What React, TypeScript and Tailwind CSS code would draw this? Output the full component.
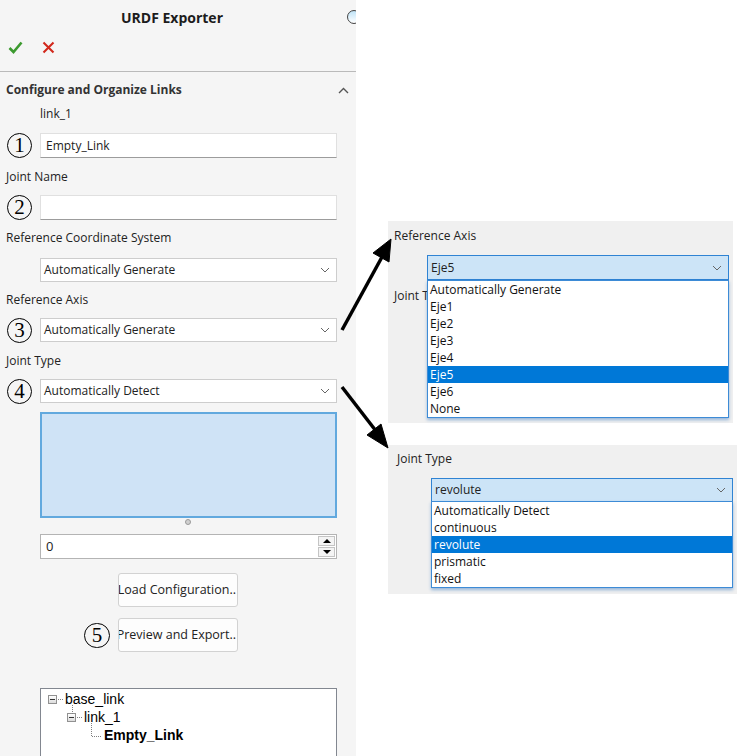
import React from "react";

function Circled({ n }: { n: number }) {
  return (
    <div className="w-[40px] shrink-0 flex pl-[7px]">
      <div className="w-[25px] h-[25px] rounded-full border-[1.3px] border-black flex items-center justify-center font-['Liberation_Serif',serif] text-[21px] leading-none text-black">
        {n}
      </div>
    </div>
  );
}

function Chevron({ color = "#666" }: { color?: string }) {
  return (
    <svg width="10" height="6" viewBox="0 0 10 6">
      <polyline points="1,1 5,5 9,1" fill="none" stroke={color} strokeWidth="1" />
    </svg>
  );
}

function SelectBox({ value }: { value: string }) {
  return (
    <div className="w-[297px] h-full bg-white border border-[#cdcdcd] flex items-center justify-between pl-[3px] pr-[6px]">
      <span>{value}</span>
      <Chevron />
    </div>
  );
}

function TextBox({ value }: { value: string }) {
  return (
    <div className="w-[297px] h-full bg-white border border-[#e0e0e0] border-b-[#9c9c9c] flex items-center pl-[5px]">
      {value}
    </div>
  );
}

function Row({ n, children, className }: { n?: number; children: React.ReactNode; className: string }) {
  return (
    <div className={"flex items-center " + className}>
      {n ? <Circled n={n} /> : <div className="w-[40px] shrink-0" />}
      {children}
    </div>
  );
}

function TreeBox() {
  return (
    <div className="w-[9px] h-[9px] border border-[#919191] bg-gradient-to-b from-white to-[#dcdcdc] flex items-center justify-center">
      <div className="w-[5px] h-px bg-[#333]" />
    </div>
  );
}

function DropList({ items, selected }: { items: string[]; selected: string }) {
  return (
    <div className="w-[302px] bg-white border border-[#3d8bd6] shadow-[0_2px_3px_rgba(40,110,190,0.45)]">
      {items.map((it) => (
        <div
          key={it}
          className={"h-[17px] flex items-center pl-[2px]" + (it === selected ? " bg-[#0078d7] text-white" : " text-[#111]")}
        >
          {it}
        </div>
      ))}
    </div>
  );
}

export default function App() {
  return (
    <div className="w-[738px] h-[756px] bg-white relative overflow-hidden flex font-['Open_Sans',sans-serif] text-[12px] text-[#222]">
      {/* property manager panel */}
      <div className="w-[356px] h-full shrink-0 bg-[#f5f5f5] flex flex-col overflow-hidden">
        <div className="h-[34px] relative flex items-center justify-center pr-[12px]">
          <span className="text-[14px] font-bold text-[#1c1c1c]">URDF Exporter</span>
          <div className="absolute left-[347px] top-[10px] w-[14px] h-[14px] rounded-full border-[1.5px] border-[#444] bg-gradient-to-b from-[#bfe3f7] to-white" />
        </div>
        <div className="h-[37px] flex items-start pl-[8px] pt-[7px] gap-[19px]">
          <svg width="15" height="13" viewBox="0 0 15 13">
            <path d="M1.5 7 L5.5 11 L13.5 1.5" fill="none" stroke="#3c9a2f" strokeWidth="2.6" />
          </svg>
          <svg width="13" height="13" viewBox="0 0 13 13">
            <path d="M1.5 1.5 L11.5 11.5 M11.5 1.5 L1.5 11.5" fill="none" stroke="#d2281c" strokeWidth="2.1" />
          </svg>
        </div>
        <div className="h-px bg-[#bababa]" />

        <div className="mt-[9px] h-[18px] flex items-center justify-between pl-[6px] pr-[7px]">
          <span className="font-bold text-[#333]">Configure and Organize Links</span>
          <svg width="11" height="7" viewBox="0 0 11 7">
            <polyline points="1,6 5.5,1.5 10,6" fill="none" stroke="#555" strokeWidth="1.4" />
          </svg>
        </div>
        <div className="mt-[6px] h-[18px] flex items-center pl-[40px]">link_1</div>
        <Row n={1} className="mt-[10px] h-[25px]">
          <TextBox value="Empty_Link" />
        </Row>
        <div className="mt-[10px] h-[18px] flex items-center pl-[6px]">Joint Name</div>
        <Row n={2} className="mt-[9px] h-[25px]">
          <TextBox value="" />
        </Row>
        <div className="mt-[9px] h-[18px] flex items-center pl-[6px]">Reference Coordinate System</div>
        <Row className="mt-[11px] h-[24px]">
          <SelectBox value="Automatically Generate" />
        </Row>
        <div className="mt-[9px] h-[18px] flex items-center pl-[6px]">Reference Axis</div>
        <Row n={3} className="mt-[9px] h-[24px]">
          <SelectBox value="Automatically Generate" />
        </Row>
        <div className="mt-[10px] h-[18px] flex items-center pl-[6px]">Joint Type</div>
        <Row n={4} className="mt-[9px] h-[24px]">
          <SelectBox value="Automatically Detect" />
        </Row>
        <div className="mt-[9px] ml-[40px] w-[297px] h-[106px] bg-[#cfe3f6] border-2 border-[#62a9de]" />
        <div className="h-[16px] pt-px pl-[185px]">
          <div className="w-[6px] h-[6px] rounded-full bg-[#d0d0d0] border border-[#9a9a9a]" />
        </div>
        <Row className="h-[25px]">
          <div className="w-[297px] h-full bg-white border border-[#b4b4b4] flex items-center justify-between pl-[5px] pr-[1px]">
            <span className="text-[13px]">0</span>
            <div className="flex flex-col gap-px">
              <div className="w-[17px] h-[10px] border border-[#c4c4c4] bg-[#f4f4f4] flex items-center justify-center">
                <div className="w-0 h-0 border-l-[4px] border-r-[4px] border-b-[4px] border-l-transparent border-r-transparent border-b-black" />
              </div>
              <div className="w-[17px] h-[10px] border border-[#c4c4c4] bg-[#f4f4f4] flex items-center justify-center">
                <div className="w-0 h-0 border-l-[4px] border-r-[4px] border-t-[4px] border-l-transparent border-r-transparent border-t-black" />
              </div>
            </div>
          </div>
        </Row>
        <div className="mt-[14px] ml-[118px] w-[120px] h-[34px] bg-[#fdfdfd] border border-[#d2d2d2] rounded-[3px] overflow-hidden flex items-center justify-end pr-px whitespace-nowrap text-[12.5px]">
          Load Configuration..
        </div>
        <div className="mt-[11px] ml-[84px] flex items-center gap-[8px]">
          <div className="w-[26px] h-[25px] rounded-full border-[1.3px] border-black flex items-center justify-center font-['Liberation_Serif',serif] text-[21px] leading-none text-black">
            5
          </div>
          <div className="w-[120px] h-[34px] bg-[#fdfdfd] border border-[#d2d2d2] rounded-[3px] overflow-hidden flex items-center justify-end pr-px whitespace-nowrap text-[12.5px]">
            Preview and Export..
          </div>
        </div>
        <div className="mt-[36px] ml-[40px] w-[297px] flex-1 bg-white border border-b-0 border-[#828790] relative pt-px font-['Liberation_Sans',sans-serif] text-[14px] text-black">
          <svg className="absolute left-0 top-0" width="120" height="60">
            <g stroke="#808080" strokeWidth="1" strokeDasharray="1 1" fill="none">
              <line x1="17" y1="10.5" x2="23" y2="10.5" />
              <line x1="31.5" y1="16" x2="31.5" y2="25" />
              <line x1="36" y1="28.5" x2="42" y2="28.5" />
              <line x1="50.5" y1="34" x2="50.5" y2="48" />
              <line x1="51" y1="47.5" x2="60" y2="47.5" />
            </g>
          </svg>
          <div className="h-[18px] flex items-center pl-[7px]">
            <TreeBox />
            <span className="ml-[8px]">base_link</span>
          </div>
          <div className="h-[18px] flex items-center pl-[26px]">
            <TreeBox />
            <span className="ml-[8px]">link_1</span>
          </div>
          <div className="h-[18px] flex items-center pl-[63px]">
            <span className="font-bold">Empty_Link</span>
          </div>
        </div>
      </div>

      {/* zoomed dropdown captures */}
      <div className="flex flex-col">
        <div className="mt-[221px] ml-[32px] w-[345px] h-[202px] bg-[#f0f0f0] relative pl-[6px]">
          <div className="pt-[6px] h-[24px] flex items-center">Reference Axis</div>
          <div className="mt-[10px] ml-[33px] w-[302px] h-[25px] bg-[#cce4f7] border border-[#2f83d3] flex items-center justify-between pl-[3px] pr-[6px]">
            <span>Eje5</span>
            <Chevron />
          </div>
          <div className="mt-[7px] h-[18px] flex items-center">Joint Type</div>
          <div className="absolute left-[39px] top-[59px]">
            <DropList
              items={["Automatically Generate", "Eje1", "Eje2", "Eje3", "Eje4", "Eje5", "Eje6", "None"]}
              selected="Eje5"
            />
          </div>
        </div>
        <div className="mt-[22px] ml-[32px] w-[349px] h-[149px] bg-[#f0f0f0] relative pl-[9px]">
          <div className="pt-[5px] h-[23px] flex items-center">Joint Type</div>
          <div className="mt-[10px] ml-[34px] w-[302px] h-[24px] bg-[#cce4f7] border border-[#2f83d3] flex items-center justify-between pl-[3px] pr-[6px]">
            <span>revolute</span>
            <Chevron />
          </div>
          <div className="absolute left-[43px] top-[56px]">
            <DropList
              items={["Automatically Detect", "continuous", "revolute", "prismatic", "fixed"]}
              selected="revolute"
            />
          </div>
        </div>
      </div>

      {/* annotation arrows */}
      <svg className="absolute left-0 top-0 pointer-events-none" width="738" height="756">
        <g fill="black" stroke="black">
          <line x1="342" y1="330" x2="382" y2="257" strokeWidth="3.5" />
          <polygon points="391,239 389,262 373,253" strokeWidth="1" />
          <line x1="342" y1="387" x2="376" y2="431" strokeWidth="3.5" />
          <polygon points="388,448 381,424 367,435" strokeWidth="1" />
        </g>
      </svg>
    </div>
  );
}
